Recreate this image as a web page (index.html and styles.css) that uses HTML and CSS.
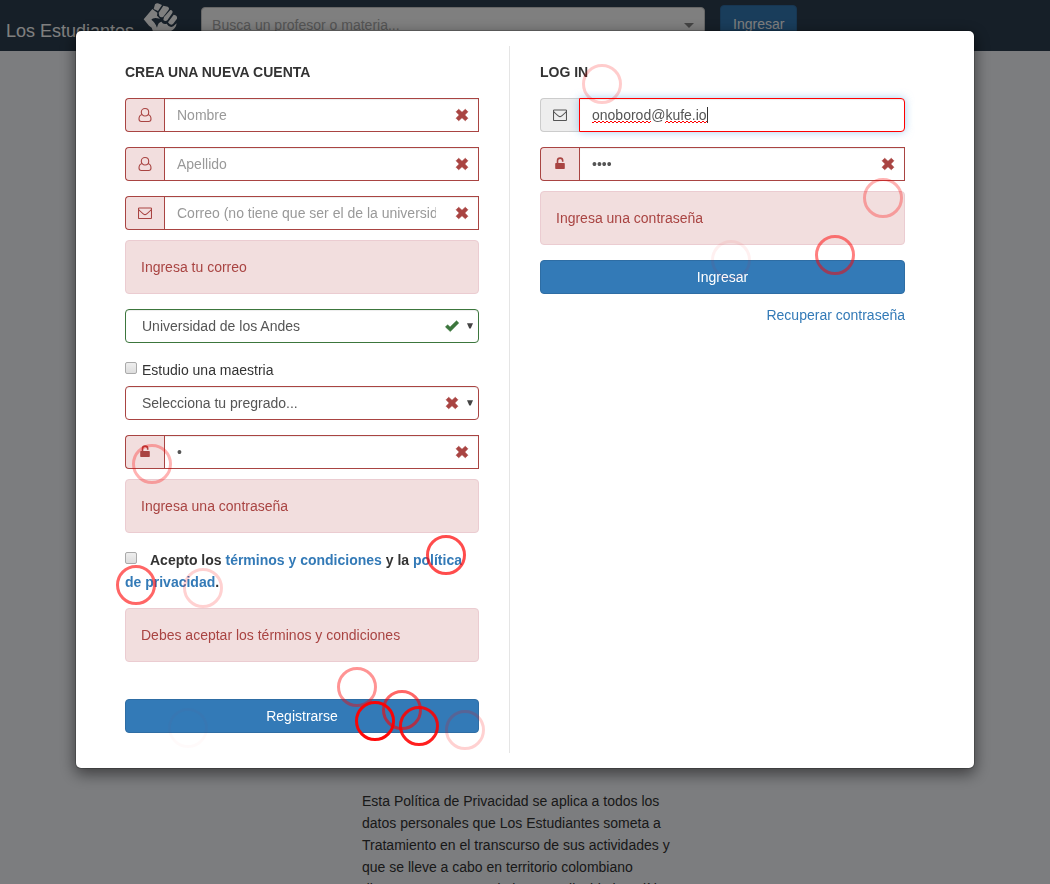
FILE: index.html
```html
<!DOCTYPE html>
<html lang="es">
<head>
<meta charset="utf-8">
<meta name="viewport" content="width=device-width, initial-scale=1">
<title>Los Estudiantes</title>
<link rel="stylesheet" href="styles.css">
</head>
<body>
<svg class="sprite" aria-hidden="true">
  <symbol id="user" viewBox="0 0 14 16"><path d="M7 1.500c2.100 0 3.700 1.600 3.700 3.700S9.100 9 7 9 3.300 7.300 3.300 5.200 4.900 1.500 7 1.500zM4 7.500C2 8 1 9.800 1 12c0 1.600.9 2.500 2.300 2.500h7.400c1.400 0 2.300-.9 2.300-2.500 0-2.200-1-4-3-4.500" fill="none" stroke="currentColor" stroke-width="1.100"/></symbol>
  <symbol id="mail" viewBox="0 0 14 16"><path d="M1.100 3h11.800q.6 0 .6.600v9.300q0 .6-.6.600H1.100q-.6 0-.6-.6V3.600Q.5 3 1.100 3zM.6 4.500C2 6.300 4 7.800 5.600 9.100q1.400 1.100 2.800 0C10 7.800 12 6.300 13.400 4.500" fill="none" stroke="currentColor" stroke-width="1.100"/></symbol>
  <symbol id="lock" viewBox="0 0 14 16"><path d="M3 7h8q.8 0 .8.800v4.400q0 .8-.8.800H3q-.8 0-.8-.8V7.800Q2.200 7 3 7z" fill="currentColor"/><path d="M4.500 7.500V4.700a2.600 2.600 0 0 1 5.200 0v1" fill="none" stroke="currentColor" stroke-width="1.600"/></symbol>
  <symbol id="cross" viewBox="0 0 14 14"><path d="M3.700 1.200 7 4.300l3.300-3.100 2.600 2.600L9.800 7l3.100 3.200-2.600 2.600L7 9.700l-3.300 3.100-2.600-2.600L4.200 7 1.100 3.800z" fill="currentColor" stroke="currentColor" stroke-width=".6" stroke-linejoin="round"/></symbol>
  <symbol id="check" viewBox="0 0 14 14"><path d="M.4 7.900 2.600 5.700l2.500 2.200 6.400-6.200 2.300 2.200L5.300 12.600z" fill="currentColor" stroke="currentColor" stroke-width=".5" stroke-linejoin="round"/></symbol>
  <symbol id="arrow" viewBox="0 0 6 6"><path d="M0 .2h6L3.700 5.600H2.300z" fill="currentColor"/></symbol>
</svg>

<header class="navbar">
  <a class="brand" href="#">Los Estudiantes</a>
  <svg class="fist" viewBox="430 6 108 105" aria-hidden="true">
    <path fill="#fff" d="M466 13Q472 7 480 12L487 15 475 33 462 27zM491 17 504 20Q511 24 506 31L491 50Q484 54 479 48L477 38zM512 30Q521 31 518 39L503 61Q497 66 491 60L493 51zM522 44Q534 46 532 56L520 72Q512 78 505 67z"/>
    <path fill="#fff" d="M458 27 432 58 448 77 456 83 466 111H510L513 94Q529 86 531 70L521 79Q509 85 501 71 491 75 485 65 475 67 472 83 466 66 455 59 460 51 481 56L472 47 473 38z"/>
  </svg>
  <div class="search">
    <input type="text" placeholder="Busca un profesor o materia..." aria-label="Busca un profesor o materia">
    <span class="search-arrow"></span>
  </div>
  <button class="btn nav-btn" type="button">Ingresar</button>
</header>

<main class="policy">
  <p>Esta Política de Privacidad se aplica a todos los datos personales que Los Estudiantes someta a Tratamiento en el transcurso de sus actividades y que se lleve a cabo en territorio colombiano directamente, o cuando le sea aplicable la política.</p>
</main>

<div class="modal">
  <div class="dialog" role="dialog" aria-modal="true" aria-label="Cuenta">
    <form class="column signup">
      <h2>CREA UNA NUEVA CUENTA</h2>
      <div class="field error">
        <label class="addon" for="name" aria-label="Nombre"><svg><use href="#user"/></svg></label>
        <input class="control" id="name" type="text" placeholder="Nombre">
        <svg class="feedback"><use href="#cross"/></svg>
      </div>
      <div class="field error">
        <label class="addon" for="surname" aria-label="Apellido"><svg><use href="#user"/></svg></label>
        <input class="control" id="surname" type="text" placeholder="Apellido">
        <svg class="feedback"><use href="#cross"/></svg>
      </div>
      <div class="field error">
        <label class="addon" for="email" aria-label="Correo"><svg><use href="#mail"/></svg></label>
        <input class="control" id="email" type="text" placeholder="Correo (no tiene que ser el de la universidad)">
        <svg class="feedback"><use href="#cross"/></svg>
      </div>
      <div class="alert">Ingresa tu correo</div>
      <div class="field success">
        <select class="control" aria-label="Universidad"><option>Universidad de los Andes</option></select>
        <svg class="feedback inset"><use href="#check"/></svg>
        <svg class="arrow"><use href="#arrow"/></svg>
      </div>
      <div class="option">
        <input type="checkbox" id="master"><label for="master">Estudio una maestria</label>
      </div>
      <div class="field error">
        <select class="control" aria-label="Pregrado"><option>Selecciona tu pregrado...</option></select>
        <svg class="feedback inset"><use href="#cross"/></svg>
        <svg class="arrow"><use href="#arrow"/></svg>
      </div>
      <div class="field error">
        <label class="addon" for="pass" aria-label="Contraseña"><svg><use href="#lock"/></svg></label>
        <input class="control" id="pass" type="password" value="a">
        <svg class="feedback"><use href="#cross"/></svg>
      </div>
      <div class="alert">Ingresa una contraseña</div>
      <div class="terms">
        <input type="checkbox" id="terms"><label for="terms">Acepto los <a href="#">términos y condiciones</a> y la <a href="#">política de privacidad</a>.</label>
      </div>
      <div class="alert">Debes aceptar los términos y condiciones</div>
      <button class="btn block register" type="button">Registrarse</button>
    </form>
    <form class="column login">
      <h2>LOG IN</h2>
      <div class="field focused">
        <label class="addon" for="login-email" aria-label="Correo"><svg><use href="#mail"/></svg></label>
        <input class="control" id="login-email" type="text" value="onoborod@kufe.io" spellcheck="false">
        <span class="spelling" aria-hidden="true">
          <svg width="117" height="16">
            <defs><pattern id="wave" width="4" height="3" y="14" patternUnits="userSpaceOnUse"><path d="M-1 0 1 2 3 0 5 2" fill="none" stroke="#f00"/></pattern></defs>
            <path d="M0 14h59v3H0zM73 14h42v3H73z" fill="url(#wave)"/>
            <path d="M115 0h1v16h-1z" fill="#333"/>
          </svg>
        </span>
      </div>
      <div class="field error">
        <label class="addon" for="login-pass" aria-label="Contraseña"><svg><use href="#lock"/></svg></label>
        <input class="control" id="login-pass" type="password" value="abcd">
        <svg class="feedback"><use href="#cross"/></svg>
      </div>
      <div class="alert">Ingresa una contraseña</div>
      <button class="btn block" type="button">Ingresar</button>
      <a class="recover" href="#">Recuperar contraseña</a>
    </form>
  </div>
</div>

<svg class="touches" aria-hidden="true">
  <circle cx="602" cy="84" r="18.500" opacity=".2"/>
  <circle cx="883" cy="198" r="18.500" opacity=".3"/>
  <circle cx="835" cy="255" r="18.500" opacity=".5"/>
  <circle cx="731" cy="260" r="18.500" opacity=".06"/>
  <circle cx="152" cy="464" r="18.500" opacity=".3"/>
  <circle cx="446" cy="555" r="18.500" opacity=".7"/>
  <circle cx="136" cy="585" r="18.500" opacity=".6"/>
  <circle cx="203" cy="588" r="18.500" opacity=".18"/>
  <circle cx="357" cy="687" r="18.500" opacity=".42"/>
  <circle cx="188" cy="728" r="18.500" opacity=".02"/>
  <circle cx="402" cy="710" r="18.500" opacity=".6"/>
  <circle cx="375" cy="721" r="18.500" opacity=".96"/>
  <circle cx="419" cy="726" r="18.500" opacity=".88"/>
  <circle cx="465" cy="730" r="18.500" opacity=".18"/>
</svg>
</body>
</html>
```
FILE: styles.css
```css
* { box-sizing: border-box; }

body {
  margin: 0;
  height: 100vh;
  overflow: hidden;
  background: #f8fafe;
  color: #333;
  font: 14px/22px "Liberation Sans", Arial, sans-serif;
}

input, select, button { font: inherit; }
a { color: #337ab7; text-decoration: none; }
.sprite { display: none; position: absolute; }

/* Page behind the dialog */
.navbar {
  display: flex;
  align-items: flex-start;
  height: 51px;
  background: #2c3e50;
}
.brand {
  margin: 20px 0 0 6px;
  color: #fff;
  font-size: 18px;
}
.fist {
  flex: none;
  width: 36px;
  height: 35px;
  margin: 2px 22px 0 9px;
}
.search {
  position: relative;
  flex: none;
  width: 48%;
  margin-top: 7px;
}
.search input {
  display: block;
  width: 100%;
  height: 36px;
  padding: 0 10px;
  border: 1px solid #ccc;
  border-radius: 4px;
  background: #fff;
}
.search input::placeholder { color: #aaa; }
.search-arrow {
  position: absolute;
  right: 11px;
  top: 16px;
  border: 5px solid transparent;
  border-top-color: #888;
  border-bottom: 0;
}
.policy {
  max-width: 326px;
  margin: 0 auto;
  padding-top: 739px;
}
.policy p { margin: 0; }

/* Dialog */
.modal {
  position: fixed;
  inset: 0;
  overflow: hidden;
  padding: 30px 15px;
  background: rgba(0, 0, 0, .5);
}
.dialog {
  display: grid;
  grid-template-columns: 419fr 449fr;
  max-width: 900px;
  margin: 0 auto;
  padding: 15px;
  border: 1px solid rgba(0, 0, 0, .2);
  border-radius: 6px;
  background: #fff;
  background-clip: padding-box;
  box-shadow: 0 5px 15px rgba(0, 0, 0, .5);
}
.column { padding: 15px 30px 20px; min-width: 0; }
.signup { padding-left: 34px; border-right: 1px solid #e5e5e5; }
.login { padding-right: 54px; }
h2 {
  margin: 0 0 15px;
  font-size: 14px;
  line-height: 22px;
}

/* Form controls */
.field {
  position: relative;
  display: flex;
  height: 34px;
  margin-bottom: 15px;
}
.addon {
  flex: none;
  display: flex;
  align-items: center;
  justify-content: center;
  width: 39px;
  border: 1px solid #ccc;
  border-right: 0;
  border-radius: 4px 0 0 4px;
  background: #eee;
  color: #555;
}
.addon svg { width: 14px; height: 16px; }
.control {
  flex: 1;
  min-width: 0;
  padding: 0 42px 0 12px;
  border: 1px solid #ccc;
  border-radius: 0;
  outline: 0;
  background: #fff;
  color: #555;
  box-shadow: inset 0 1px 1px rgba(0, 0, 0, .075);
}
.control::placeholder { color: #999; opacity: 1; }
select.control {
  appearance: none;
  padding-left: 16px;
  border-radius: 4px;
}
.error .control { border-color: #a94442; }
.error .addon {
  border-color: #a94442;
  background: #f2dede;
  color: #a94442;
}
.success .control { border-color: #3c763d; }
.feedback {
  position: absolute;
  top: 10px;
  right: 10px;
  width: 14px;
  height: 14px;
  color: #a94442;
}
.feedback.inset { right: 20px; }
.success .feedback { color: #3c763d; }
.arrow {
  position: absolute;
  top: 14px;
  right: 6px;
  width: 6px;
  height: 6px;
  color: #444;
}
.focused .control {
  border-color: #f00;
  border-radius: 0 4px 4px 0;
  box-shadow: inset 0 1px 1px rgba(0, 0, 0, .075), 0 0 8px rgba(102, 175, 233, .6);
}
.spelling {
  position: absolute;
  left: 52px;
  top: 9px;
  pointer-events: none;
}
.spelling svg { display: block; overflow: visible; }

.alert {
  margin: -5px 0 15px;
  padding: 15px;
  border: 1px solid #ebccd1;
  border-radius: 4px;
  background: #f2dede;
  color: #a94442;
}
.option {
  margin-bottom: 4px;
  line-height: 24px;
}
input[type="checkbox"] {
  appearance: none;
  width: 12px;
  height: 12px;
  margin: 0 5px 0 0;
  border: 1px solid #aaa;
  border-radius: 2px;
  background: linear-gradient(#eee, #ddd);
  vertical-align: 1px;
}
.terms { margin: 16px 0 20px; font-weight: bold; }
.terms input[type="checkbox"] { margin-right: 13px; }
.btn {
  padding: 0 12px;
  border: 1px solid #2e6da4;
  border-radius: 4px;
  background: #337ab7;
  color: #fff;
}
.nav-btn {
  height: 38px;
  margin: 5px 0 0 15px;
}
.block {
  display: block;
  width: 100%;
  height: 34px;
}
.register { margin-top: 37px; }
.recover {
  display: block;
  margin-top: 10px;
  text-align: right;
}

/* Touch markers float over everything */
.touches {
  position: fixed;
  inset: 0;
  width: 100%;
  height: 100%;
  pointer-events: none;
  fill: none;
  stroke: #f00;
  stroke-width: 3px;
}
```
